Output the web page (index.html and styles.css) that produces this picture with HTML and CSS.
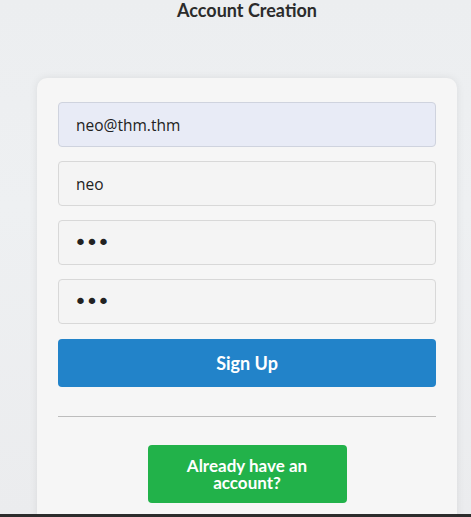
FILE: index.html
```html
<!DOCTYPE html>
<html lang="en">
<head>
  <meta charset="UTF-8" />
  <title>Account Creation</title>
  <link rel="stylesheet" href="styles.css">
</head>
<body>

  <div class="page">
    <h1 class="title">Account Creation</h1>

    <form class="signup-card" onsubmit="return false">
      <input class="field autofilled" type="email" value="neo@thm.thm" />
      <input class="field" type="text" value="neo" />
      <input class="field secret" type="password" value="neo" />
      <input class="field secret" type="password" value="neo" />
      <button class="btn signup" type="submit">Sign Up</button>
      <hr class="divider" />
      <div class="login-row">
        <button class="btn login" type="button">Already have an account?</button>
      </div>
    </form>
  </div>

  <div class="taskbar"></div>

</body>
</html>
```

FILE: styles.css
```css
body {
  margin: 0;
  font-family: "Lato", "Liberation Sans", sans-serif;
  background: linear-gradient(180deg, #eceef0 0%, #eef0f2 40%, #ebecee 100%);
  height: 517px;
  overflow: hidden;
}

.page {
  width: 420px;
  margin-left: 37px;
}

.title {
  margin: 0;
  font-size: 18px;
  font-weight: 700;
  color: #2b2b2b;
  text-align: center;
  line-height: 21px;
}

.signup-card {
  margin-top: 57px;
  background: #f6f6f6;
  border-radius: 10px;
  padding: 24px 21px 40px;
  box-shadow: 0 0 8px rgba(0, 0, 0, 0.08);
  display: flex;
  flex-direction: column;
  gap: 15px;
}

.field {
  box-sizing: border-box;
  height: 45px;
  width: 100%;
  padding: 0 17px;
  border: 1px solid #d8d8d8;
  border-radius: 4px;
  background: #f4f4f4;
  font-family: "Open Sans", "Noto Sans", sans-serif;
  font-size: 15.5px;
  color: #222;
}

.field + .field {
  margin-top: -1px;
}

.field.autofilled {
  background: #e8ebf6;
  border-color: #cfd3de;
}

.field.secret {
  font-family: "DejaVu Sans", sans-serif;
  font-size: 22px;
  letter-spacing: -1.5px;
  padding-left: 15px;
}

.btn {
  border: none;
  border-radius: 4px;
  color: white;
  font-family: "Lato", sans-serif;
  font-weight: 700;
  cursor: pointer;
}

.signup {
  margin-top: 0;
  height: 48px;
  background: #2283c9;
  font-size: 18px;
}

.divider {
  margin: 14px 0 0;
  border: none;
  border-top: 1px solid #bdbdbd;
}

.login-row {
  display: flex;
  justify-content: center;
  margin-top: 13px;
}

.login {
  width: 199px;
  height: 58px;
  padding: 4px 24px;
  background: #22b24a;
  font-size: 17px;
  line-height: 17px;
}

.taskbar {
  position: fixed;
  left: 0;
  right: 0;
  bottom: 0;
  height: 3px;
  background: #2c2c2c;
}
```
